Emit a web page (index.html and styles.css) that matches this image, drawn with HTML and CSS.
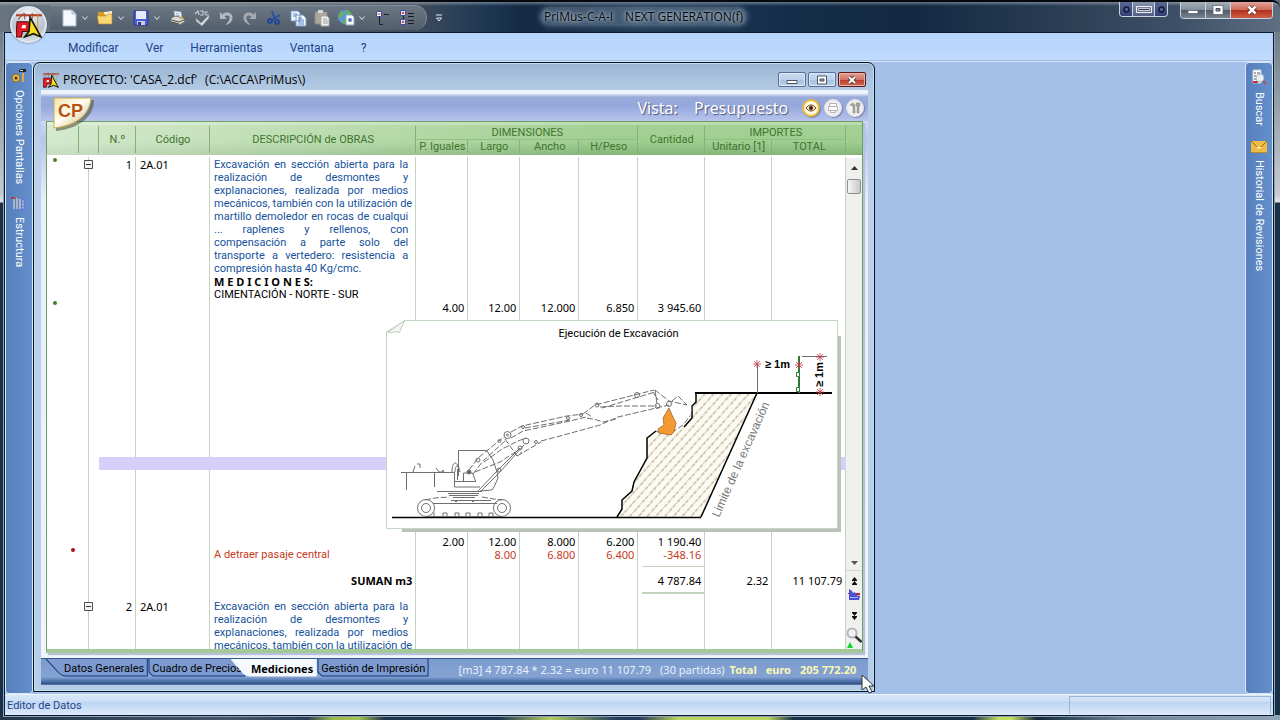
FILE: index.html
```html
<!DOCTYPE html>
<html lang="es">
<head>
<meta charset="utf-8">
<title>PriMus-C-A-I NEXT GENERATION(f)</title>
<link rel="stylesheet" href="styles.css">
</head>
<body>
<svg class="defs" width="0" height="0" aria-hidden="true">
  <defs>
    <symbol id="logo" viewBox="0 0 24 24">
      <path d="M2 7l5-6M8 1v6M15 1v6" stroke="#84604c" stroke-width="1"/>
      <path d="M0 3h24" stroke="#b0452d" stroke-width="2"/>
      <path d="M20 3v14" stroke="#c9a24a"/>
      <path d="M1 9h9c5 0 5 9 0 9H6l-1 5H0z" fill="#e01b24" stroke="#4b0a0c"/>
      <path d="M6 12h3v3H5z" fill="#fff"/>
      <path d="M13 5l10 18-7-3-8 3 4-5z" fill="#f4e11d" stroke="#16140a" stroke-width="1.5"/>
    </symbol>
    <symbol id="chev" viewBox="0 0 8 8"><path d="M1.500 2.500l2.500 3 2.500-3" fill="none" stroke="#e6edf5"/></symbol>
    <symbol id="fold" viewBox="0 0 9 9"><path d="M.5.5h8v8h-8z" fill="#f4f4f0" stroke="#4c4c4c"/><path d="M2 4.500h5" stroke="#333"/></symbol>
    <pattern id="hatch" width="6.500" height="12" patternUnits="userSpaceOnUse" patternTransform="rotate(42)">
      <rect width="6.500" height="12" fill="#fcfaf3"/>
      <path d="M1 0v4M1 5v1M1 7v4" stroke="#8f8350" stroke-width=".8"/>
    </pattern>
    <g id="tick"><path d="M-3-3L3 3M-3 3L3-3M0-4V4M-4 0H4" stroke="#c43c46" stroke-width=".8"/></g>
  </defs>
</svg>

<div class="app">
  <header class="titlebar">
    <button class="orb" aria-label="Menú principal"><svg width="26" height="26"><use href="#logo"/></svg></button>
    <div class="quick">
      <button class="tool" aria-label="Nuevo"><svg width="16" height="18"><path d="M2 1h9l4 4v12H2z" fill="#f4f8ff" stroke="#a9b8cb"/><path d="M11 1v4h4" fill="#cbd8e8" stroke="#a9b8cb"/></svg></button>
      <button class="drop" aria-label="Opciones de nuevo"><svg width="8" height="8"><use href="#chev"/></svg></button>
      <button class="tool" aria-label="Abrir"><svg width="16" height="16"><path d="M1 2h14v12H1z" fill="#d99a2a"/><path d="M1 2h6v2h8V2" fill="#f6efcf"/><path d="M8 2l7-1v4H8z" fill="#fbf3cf"/><path d="M0 6h9l2-2h4v10H2z" fill="#f7d873" stroke="#b98829" stroke-width=".6"/></svg></button>
      <button class="drop" aria-label="Opciones de abrir"><svg width="8" height="8"><use href="#chev"/></svg></button>
      <button class="tool" aria-label="Guardar"><svg width="16" height="16"><path d="M1 1h14v14H1z" fill="#4c5fd2" stroke="#2a378f"/><path d="M3 1h10v8H3z" fill="#e4eaf8"/><path d="M4 11h8v4H4z" fill="#c7cde4"/><path d="M5 12h3v3H5z" fill="#2a378f"/></svg></button>
      <button class="drop last" aria-label="Opciones de guardar"><svg width="8" height="8"><use href="#chev"/></svg></button>
      <button class="tool" aria-label="Imprimir"><svg width="16" height="16"><path d="M4 1l7 1 1 6-7 1z" fill="#fff" stroke="#8fa6c4" stroke-width=".6"/><path d="M5.500 3l4 1M6 5l4 1" stroke="#6f8fc0" stroke-width=".8"/><path d="M1 8l4-2 9 2 1 4-6 3-8-3z" fill="#dcdcd6" stroke="#5b5b60" stroke-width=".8"/><path d="M2 10l7 2 5-2M2 12l7 2" stroke="#4d4a44" fill="none"/><path d="M10 8h3" stroke="#d5a33a" stroke-width="2"/></svg></button>
      <button class="tool" aria-label="Ortografía"><svg width="16" height="16"><path d="M1 4l3-3 1 4M6 1h3v4H6M14 2h-3l1 3h3" fill="none" stroke="#c5cad1" stroke-width="1.2"/><path d="M2 8l5 5 8-8v3l-7 8-6-5z" fill="#d7d9da" stroke="#8b8f95" stroke-width=".6"/></svg></button>
      <button class="tool" aria-label="Deshacer"><svg width="16" height="16"><path d="M2 2v7h7L6.500 6.500c2-2 6-1 5 2-.5 3-2 4-4 6.500 5-1.500 7-4 7-7.500 0-5-7-6.500-10-3z" fill="#b4b7bb"/></svg></button>
      <button class="tool" aria-label="Rehacer"><svg width="16" height="16"><path d="M14 2v7H7l2.500-2.500c-2-2-6-1-5 2 .5 3 2 4 4 6.500-5-1.500-7-4-7-7.500 0-5 7-6.500 10-3z" fill="#a4a9af"/></svg></button>
      <button class="tool" aria-label="Cortar"><svg width="16" height="16"><path d="M6 1l3 8M14 5L6 10" stroke="#2a4fa8" stroke-width="2"/><circle cx="4" cy="11" r="2" fill="none" stroke="#183f9c" stroke-width="1.6"/><circle cx="11" cy="12" r="2" fill="none" stroke="#183f9c" stroke-width="1.6"/></svg></button>
      <button class="tool" aria-label="Copiar"><svg width="18" height="18"><path d="M2 2h7l2 2v8H2zM7 6h7l3 3v8H7z" fill="#f3f8ff" stroke="#7b98c4"/><path d="M4 5h4M4 7h3M9 9h4M9 11h6M9 13h6M9 15h6" stroke="#5680bd"/></svg></button>
      <button class="tool" aria-label="Pegar"><svg width="18" height="18"><path d="M2 3h12v12H2z" fill="#aaa79c" stroke="#8a8a84"/><path d="M5 1h5v3H5z" fill="#d8d8d8"/><path d="M8 7h6l2 2v8H8z" fill="#f1f1ee" stroke="#a9a9a4"/><path d="M10 10h4M10 12h5M10 14h5" stroke="#a0a0a0"/></svg></button>
      <button class="tool" aria-label="Web"><svg width="18" height="18"><circle cx="8" cy="8" r="7" fill="#5c97d8"/><path d="M3 3c3-2 4 0 3 3S2 9 1 8zM9 1c5 0 6 4 5 7-3 0-3-3-5-3zM5 14l2-4 4 1-1 4z" fill="#62b35a"/><path d="M9 6h6l2 2v8H9z" fill="#f7faff" stroke="#93a6bd"/><circle cx="13" cy="11" r="2" fill="#6079b5"/></svg></button>
      <button class="drop last" aria-label="Opciones de web"><svg width="8" height="8"><use href="#chev"/></svg></button>
      <button class="tool" aria-label="Contraer"><svg width="16" height="16"><path d="M1.500 1.500h5v5h-5z" fill="#fff" stroke="#3b4f9f"/><path d="M2.500 4h3" stroke="#c12a2a"/><path d="M9 4.500h5M4.500 7v7.500H8" stroke="#1a1d28" fill="none"/><path d="M9 8.500h5M9 11.500h5M9 14.500h5" stroke="#59636f"/></svg></button>
      <button class="tool" aria-label="Expandir"><svg width="16" height="16"><path d="M1.500.5h5v5h-5zM1.500 9.500h5v5h-5z" fill="#fff" stroke="#3b4f9f"/><path d="M2.500 3h3M4 1.500v3M2.500 12h3M4 10.500v3" stroke="#c12a2a"/><path d="M4.500 6v3M9 3.500h6M9 6.500h6M9 10.500h6M9 13.500h6" stroke="#1a1d28"/></svg></button>
    </div>
    <button class="more" aria-label="Personalizar"><svg width="8" height="10"><path d="M1 1h6" stroke="#e6edf5"/><path d="M1.500 4l2.500 3 2.500-3z" fill="none" stroke="#e6edf5"/></svg></button>
    <h1 class="apptitle"><span>PriMus-C-A-I</span><span>NEXT GENERATION(f)</span></h1>
    <div class="extra">
      <button aria-label="Pantalla anterior"><svg width="9" height="9"><circle cx="4.500" cy="4.500" r="2.500" fill="#55628e" stroke="#131c3d" stroke-width="1.500"/></svg></button>
      <button class="wide" aria-label="Pantalla"><svg width="18" height="9"><path d="M1.500 1.500h15v6h-15z" fill="none" stroke="#eef1f8"/><path d="M3.500 3.500h11v2h-11z" fill="#333e58" stroke="#c8ccd8"/></svg></button>
      <button aria-label="Pantalla siguiente"><svg width="9" height="9"><circle cx="4.500" cy="4.500" r="2.500" fill="#55628e" stroke="#131c3d" stroke-width="1.500"/></svg></button>
    </div>
    <div class="winctl">
      <button aria-label="Minimizar"><svg width="12" height="10"><path d="M1 5.500h10v3H1z" fill="#fff" stroke="#555b66" stroke-width=".7"/></svg></button>
      <button aria-label="Maximizar"><svg width="12" height="10"><path d="M1 .5h10v9H1z" fill="#fff" stroke="#555b66" stroke-width=".7"/><path d="M4 3.500h4v2.500H4z" fill="#8b929c" stroke="#454b56"/></svg></button>
      <button class="close" aria-label="Cerrar"><svg width="12" height="10"><path d="M2.500 1.500l7 7M9.500 1.500l-7 7" stroke="#5b2522" stroke-width="4"/><path d="M2.500 1.500l7 7M9.500 1.500l-7 7" stroke="#fff" stroke-width="2.500"/></svg></button>
    </div>
  </header>

  <div class="client">
    <nav class="menu">
      <button>Modificar</button><button>Ver</button><button>Herramientas</button><button>Ventana</button><button>?</button>
    </nav>

    <div class="work">
      <aside class="rail left">
        <button><svg width="16" height="14"><circle cx="5" cy="9" r="4" fill="#e8bc4a" stroke="#8b6a1d"/><circle cx="5" cy="9" r="1.500" fill="#3f3113"/><path d="M8 1l2-1h5v3H8z" fill="#222"/><path d="M9 1h3v1H9z" fill="#ddd"/><path d="M11 4h2v9h-2z" fill="#e3a443"/></svg><span>Opciones Pantallas</span></button>
        <button><svg width="16" height="14"><path d="M3 1v12M6 2v11M9 3v10M12 4v9" stroke="#c8c2cc" stroke-width="1.500"/><path d="M0 1h4v2H0z" fill="#b53c3c"/><path d="M10 4h4M10 7h4M10 10h4M10 13h4" stroke="#5a6cf0"/></svg><span>Estructura</span></button>
      </aside>

      <main class="desktop">
        <section class="win">
          <div class="wintitle">
            <svg width="16" height="16"><use href="#logo"/></svg>
            <h2><span>PROYECTO: 'CASA_2.dcf'</span><span>(C:\ACCA\PriMus\)</span></h2>
            <div class="ctl">
              <button aria-label="Minimizar ventana"><svg width="12" height="10"><path d="M1 5.500h10v3H1z" fill="#fff" stroke="#4c566b"/></svg></button>
              <button aria-label="Maximizar ventana"><svg width="12" height="10"><path d="M1.500 1h9v8h-9z" fill="#fff" stroke="#4c566b"/><path d="M4 4h4v2H4z" fill="#8b97ad" stroke="#4c566b"/></svg></button>
              <button class="close" aria-label="Cerrar ventana"><svg width="12" height="10"><path d="M3 2l6 6M9 2L3 8" stroke="#6b3833" stroke-width="4"/><path d="M3 2l6 6M9 2L3 8" stroke="#fff" stroke-width="2"/></svg></button>
            </div>
          </div>

          <div class="body">
            <div class="viewbar">
              <svg class="cp" width="44" height="38" aria-hidden="true">
                <defs><linearGradient id="gold" x2="1" y2="1"><stop offset="0" stop-color="#efe3a8"/><stop offset=".45" stop-color="#fffdf2"/><stop offset="1" stop-color="#cfb268"/></linearGradient></defs>
                <path d="M3 4h38c0 15-12 28-38 31z" fill="#55553d" opacity=".6"/>
                <path d="M1 2h37c-1 14-11 27-37 30z" fill="url(#gold)" stroke="#c9ae55"/>
                <text x="5" y="21">CP</text>
              </svg>
              <p class="vista"><span>Vista:</span><span>Presupuesto</span></p>
              <button class="round on" aria-label="Ver"><svg width="14" height="14"><path d="M2 7c3-4 7-4 10 0-3 4-7 4-10 0z" fill="#f3e4c8" stroke="#6a3d1a"/><circle cx="7" cy="7" r="2" fill="#3c1f0e"/></svg></button>
              <button class="round" aria-label="Imprimir vista"><svg width="14" height="14"><path d="M3.500 2.500h7v3h-7zM2.500 5.500h9v4h-9zM4.500 9.500h5v2h-5z" fill="#fafafa" stroke="#b4b4b4"/></svg></button>
              <button class="round" aria-label="Herramientas de vista"><svg width="14" height="14"><path d="M2 4l3-2 2 2v8H5V5zM8 2h4v3h-1v7H9V5H8z" fill="#a5a5a2" stroke="#858583" stroke-width=".5"/></svg></button>
            </div>

            <div class="sheet">
              <div class="gridclip">
                <table>
                  <colgroup><col class="c-mark"><col class="c-tree"><col class="c-num"><col class="c-code"><col><col class="c-s"><col class="c-s"><col class="c-m"><col class="c-m"><col class="c-l"><col class="c-l"><col class="c-xl"></colgroup>
                  <thead>
                    <tr><th rowspan="2"></th><th rowspan="2"></th><th rowspan="2">N.º</th><th rowspan="2">Código</th><th rowspan="2">DESCRIPCIÓN de OBRAS</th><th colspan="4" class="group">DIMENSIONES</th><th rowspan="2">Cantidad</th><th colspan="2" class="group">IMPORTES</th></tr>
                    <tr class="sub"><th>P. Iguales</th><th>Largo</th><th>Ancho</th><th>H/Peso</th><th>Unitario [1]</th><th>TOTAL</th></tr>
                  </thead>
                  <tbody>
                    <tr class="lead"><td></td><td></td><td></td><td></td><td></td><td></td><td></td><td></td><td></td><td></td><td></td><td></td></tr>
                    <tr><td class="mark"><i class="dot"></i></td><td class="tree"><button aria-label="Contraer 1"><svg width="9" height="9"><use href="#fold"/></svg></button></td><td>1</td><td class="code">2A.01</td><td class="txt desc">Excavación en sección abierta para la<br>realización de desmontes y<br>explanaciones, realizada por medios<br>mecánicos, también con la utilización de<br>martillo demoledor en rocas de cualqui<br>... raplenes y rellenos, con<br>compensación a parte solo del<br>transporte a vertedero: resistencia a<br><span>compresión hasta 40 Kg/cmc.</span></td><td></td><td></td><td></td><td></td><td></td><td></td><td></td></tr>
                    <tr><td></td><td></td><td></td><td></td><td class="head">M E D I C I O N E S:</td><td></td><td></td><td></td><td></td><td></td><td></td><td></td></tr>
                    <tr><td></td><td></td><td></td><td></td><td class="txt">CIMENTACIÓN - NORTE - SUR</td><td></td><td></td><td></td><td></td><td></td><td></td><td></td></tr>
                    <tr><td class="mark"><i class="dot"></i></td><td></td><td></td><td></td><td></td><td>4.00</td><td>12.00</td><td>12.000</td><td>6.850</td><td>3 945.60</td><td></td><td></td></tr>
                    <tr class="gap-a"><td></td><td></td><td></td><td></td><td></td><td></td><td></td><td></td><td></td><td></td><td></td><td></td></tr>
                    <tr class="current"><td></td><td></td><td></td><td></td><td></td><td></td><td></td><td></td><td></td><td></td><td></td><td></td></tr>
                    <tr class="gap-b"><td></td><td></td><td></td><td></td><td></td><td></td><td></td><td></td><td></td><td></td><td></td><td></td></tr>
                    <tr><td></td><td></td><td></td><td></td><td></td><td>2.00</td><td>12.00</td><td>8.000</td><td>6.200</td><td>1 190.40</td><td></td><td></td></tr>
                    <tr class="minus"><td class="mark end"><i class="dot red"></i></td><td></td><td></td><td></td><td class="txt">A detraer pasaje central</td><td></td><td>8.00</td><td>6.800</td><td>6.400</td><td>-348.16</td><td></td><td></td></tr>
                    <tr><td></td><td></td><td></td><td></td><td></td><td></td><td></td><td></td><td></td><td class="rule"></td><td></td><td></td></tr>
                    <tr><td></td><td></td><td></td><td></td><td class="sum">SUMAN m3</td><td></td><td></td><td></td><td></td><td>4 787.84</td><td>2.32</td><td>11 107.79</td></tr>
                    <tr><td></td><td></td><td></td><td></td><td></td><td></td><td></td><td></td><td></td><td class="rule thick"></td><td></td><td></td></tr>
                    <tr><td></td><td class="tree"><button aria-label="Contraer 2"><svg width="9" height="9"><use href="#fold"/></svg></button></td><td>2</td><td class="code">2A.01</td><td class="txt desc">Excavación en sección abierta para la<br>realización de desmontes y<br>explanaciones, realizada por medios<br>mecánicos, también con la utilización de</td><td></td><td></td><td></td><td></td><td></td><td></td><td></td></tr>
                  </tbody>
                </table>
              </div>

              <div class="scroll">
                <button aria-label="Subir"><svg width="7" height="4"><path d="M0 4l3.500-4L7 4z" fill="#333"/></svg></button>
                <div class="thumb"></div>
                <button class="down" aria-label="Bajar"><svg width="7" height="4"><path d="M0 0h7L3.500 4z" fill="#555"/></svg></button>
                <div class="nav">
                  <button aria-label="Partida anterior"><svg width="5" height="8"><path d="M0 3l2.500-3L5 3zM0 7l2.500-3L5 7z" fill="#111"/><path d="M0 3.500h5M0 7.500h5" stroke="#111"/></svg></button>
                  <button aria-label="Marcar"><svg width="12" height="11"><path d="M7 4h5v2H7zM0 4h2v1H0z" fill="#b32a36"/><path d="M1 0l3 2 1 2 2-1 1 3 4 1-1 4H1z" fill="#4b4fd8"/><path d="M2 8.500h8" stroke="#a9b2ff"/></svg></button>
                  <button class="next" aria-label="Partida siguiente"><svg width="5" height="8"><path d="M0 1h5L2.500 4zM0 5h5L2.500 8z" fill="#111"/><path d="M0 .5h5M0 4.500h5" stroke="#111"/></svg></button>
                </div>
                <button class="lens" aria-label="Lupa"><svg width="16" height="16"><circle cx="6" cy="6" r="4.500" fill="#eef2f5" stroke="#b4b7ba" stroke-width="2"/><path d="M9.500 9.500l6 5.500" stroke="#333" stroke-width="2.500"/></svg></button>
                <svg class="go" width="6" height="6"><path d="M0 6l3-6 3 6z" fill="#16d62a"/></svg>
              </div>

              <figure class="note">
                <svg viewBox="386 320 455 212" width="455" height="212" role="img" aria-label="Ejecución de Excavación">
                  <path d="M402 528h436V336h3v196H402z" fill="#bcc2ba"/>
                  <path d="M405 320.500h432.500v208H386.500V332z" fill="#fff" stroke="#c3d6c3"/>
                  <path d="M386.500 332l6-3 12-8.500-5 12-4-1-3 1z" fill="#f2f5f2" stroke="#bccabc"/>
                  <text class="cap" x="618.500" y="337" text-anchor="middle">Ejecución de Excavación</text>

                  <path d="M617 517l5-8v-9l10-9 2-9 13-24v-20l9-7 12 2 6 2 10-8 8-9v-12l4-4v-9h61l-56 124z" fill="url(#hatch)"/>
                  <path d="M617 517l5-8v-9l10-9 2-9 13-24v-20l9-7M684 427l8-9v-12l4-4v-9M757 393l-56 124" class="ink"/>
                  <path d="M392 517.500h309" class="ink"/>
                  <path d="M695 393h137" stroke="#000" stroke-width="2"/>
                  <path d="M656 431l5 2h10l12-8 7-9M692 406l-1 10" class="thin dash"/>

                  <g class="thin">
                    <path d="M401 472.500h53.500V487H480M406.500 473v17M434.500 473v14M458.500 476v-25.500H487M454 481.500h22M463.500 481v-8h9l3 8M457.500 469v11"/>
                    <path d="M413 472l2-6M417 464h3v4M436 468l3 4h3l1-2 1 2M452 472c0-12 6-12 7 0M455 472c0-8 4-8 5 0"/>
                    <path d="M437 491.500h45M448 493.500h31M449 495.500h29M453 497.500h22"/>
                    <path d="M451 500.500h40M433 503.500h64M426 516.500h76M434 512.500v4M443 516v-3h4v3M455 516v-3h4v3M466 516v-3h4v3M478 516v-3h4v3M489 516v-3h4v3"/>
                    <path d="M425 500l10-2 14-1M482 497l12 2 8 1M454 500l2 2 2-2M471 500l2 2 2-2" class="dash"/>
                    <circle cx="426" cy="508" r="8.500"/><circle cx="426" cy="508" r="4.500"/><circle cx="502" cy="508" r="8.500"/><circle cx="502" cy="508" r="4.500"/>
                    <circle cx="478" cy="460" r="2"/><circle cx="507.500" cy="435" r="3.500"/><circle cx="507.500" cy="435" r="1"/><circle cx="499.500" cy="441" r="1.500"/><circle cx="526" cy="441" r="3"/><circle cx="536" cy="442" r="1.500"/><circle cx="523" cy="427" r="1.500"/><circle cx="520" cy="448" r="2"/><circle cx="499" cy="470" r="2"/><circle cx="469" cy="472" r="2" fill="#666"/>
                    <circle cx="568" cy="418" r="1.500"/><circle cx="581" cy="415" r="1.500"/><circle cx="597" cy="405" r="2"/><circle cx="637" cy="395" r="2.500"/><circle cx="657.500" cy="406" r="2.500"/><circle cx="669" cy="404" r="2.500"/>
                    <path d="M487 451l6 9 4 12 1 6-4 9-2 3-12 1M478 491l20-21 22-22M481 491l19-19 24-27"/>
                    <path d="M469 470l9-12 27-22M473 474l10-13 22-20 2-3M484 462l18-13 16-8 8-3M475 472l25-10 17-11M505 439l12 17 5-4" class="dash"/>
                    <path d="M511 432l11-6 45-10 16-2M511 438l12-7 47-10 16-4M525 428l45-8M517 456l24-14M541 441l19-5 40-11 18-8 51-12" class="dash"/>
                    <path d="M583 414l12-9 59-15M587 418l10 2 6 2 13-3M602 408l53-16M600 407l20-1h37M586 413l6 4M655 390l2 14M655 390l14 11 18 4M672 401l6-5 9 9" class="dash"/>
                    <path d="M653 392l5 8"/>
                  </g>
                  <path d="M669 408l3 7 4 8-2 9-3 3-12-2-1-4 6-4-1-7z" fill="#f39a33" stroke="#a3632a" stroke-width=".8"/>

                  <path d="M757.500 364v29M802 356.500h25" class="thin"/>
                  <path d="M799 356v37" stroke="#2f7a33" stroke-width="2"/>
                  <path d="M796.500 372.500h3v4h-3zM796.500 387.500h3v4h-3z" fill="#fff" stroke="#2f7a33"/>
                  <use href="#tick" x="757" y="364"/><use href="#tick" x="799" y="365"/><use href="#tick" x="820" y="357"/><use href="#tick" x="820" y="392"/>
                  <text class="dim" x="765" y="368">≥ 1m</text>
                  <text class="dim" transform="translate(823 387) rotate(-90)">≥ 1m</text>
                  <text class="limit" transform="translate(719 518) rotate(-66)">Limite de la excavación</text>
                </svg>
              </figure>
            </div>

            <footer class="foot">
              <div class="tabs">
                <button class="tab first"><svg viewBox="0 0 102 18" preserveAspectRatio="none"><path d="M0 0L13 14Q16 17 20 17H101V0"/></svg><span>Datos Generales</span></button>
                <button class="tab"><svg viewBox="0 0 96 18" preserveAspectRatio="none"><path d="M1 0V13L5 17H95V0"/></svg><span>Cuadro de Precios</span></button>
                <button class="tab active"><svg viewBox="0 0 86 18" preserveAspectRatio="none"><path d="M0 0L13 15Q15 17 18 17H85V0"/></svg><span>Mediciones</span></button>
                <button class="tab"><svg viewBox="0 0 110 18" preserveAspectRatio="none"><path d="M1 0V13L5 17H109V0"/></svg><span>Gestión de Impresión</span></button>
              </div>
              <p class="calc"><span>[m3] 4 787.84 * 2.32 = euro 11 107.79</span><span>(30 partidas)</span></p>
              <p class="total"><span>Total</span><span>euro</span><span>205 772.20</span></p>
            </footer>
          </div>
          <svg class="cursor" width="14" height="20" aria-hidden="true"><path d="M1 1v15l4-3 3 6 3-1-3-6h5z" fill="#fff" stroke="#333"/></svg>
        </section>
      </main>

      <aside class="rail right">
        <button><svg width="16" height="16"><path d="M2 1h8v13H2z" fill="#fff" stroke="#c9cfdb"/><path d="M3 4h2M6 4h3M3 7h2M6 7h3M3 10h2" stroke="#555"/><path d="M2 12h5v2H2z" fill="#c2273d"/><circle cx="9" cy="9" r="4" fill="#e5f1f4" stroke="#a9b7c2"/><path d="M12 12l3 3" stroke="#a55" stroke-width="2"/></svg><span>Buscar</span></button>
        <button><svg width="16" height="12"><path d="M0 0h16v12H0z" fill="#eebb45"/><path d="M0 0l6 6M16 0l-6 6" stroke="#8a6a20" fill="none"/><path d="M5 6h6l-3 2z" fill="#fff0bd"/><path d="M0 11.500h16" stroke="#bf8c2a"/></svg><span>Historial de Revisiones</span></button>
      </aside>
    </div>

    <div class="status"><span>Editor de Datos</span><span class="pane"></span></div>
  </div>
</div>
</body>
</html>
```
FILE: styles.css
```css
:root {
  --ui: "Open Sans", "Noto Sans", sans-serif;
  --num: "Noto Sans", "Open Sans", sans-serif;
  --text: Roboto, "Noto Sans", sans-serif;
  --line: #c3d3bf;
}

* { box-sizing: border-box; }

body { margin: 0; font: 11px/13px var(--num); color: #000; }

h1, h2, p, figure { margin: 0; font-weight: normal; }

button {
  padding: 0;
  border: 0;
  background: none;
  color: inherit;
  font: inherit;
}

svg { display: block; }

.defs { position: absolute; }

.app {
  display: flex;
  flex-direction: column;
  height: 100vh;
  min-height: 400px;
  padding: 0 6px 4px 4px;
  overflow: hidden;
  background:
    linear-gradient(90deg, #22364c 0, #44566a 18%, #2b3f57 24%, #9ab84d 26%, #a5c552 28%, #22364f 30%, #1f3654 39%, #b4cf5e 43%, #26405f 48%, #263a58 50%, #bbd65e 53%, #bbd65e 60%, #1a3048 62%, #1a3048 76%, #c4dd60 78%, #c4dd60 79%, #14283e 81%, #70859a 88%, #8fa4b5 100%) bottom / 100% 5px no-repeat,
    linear-gradient(#5d6c7c 0, #7f8a95 60px, #c6ccd2 195px, #dfe3e7 202px, #1a3147 203px, #16304a 100%);
}

/* Main title bar */
.titlebar {
  position: relative;
  z-index: 2;
  display: flex;
  flex: none;
  align-items: flex-start;
  height: 32px;
  margin: 0 -6px 0 -4px;
  padding: 0 7px 0 10px;
  border-top: 2px solid #05080c;
  border-radius: 0 8px 0 0;
  background:
    linear-gradient(rgb(255 255 255 / 35%), rgb(255 255 255 / 0) 4px),
    linear-gradient(90deg, #68747f 0, #56626f 20%, #3c4b5c 33%, #1d3752 38%, #132a44 41%, #203a56 50%, #142e49 62%, #122941 71%, #1a3048 75%, #2c4056 84%, #3e5067 92%, #5e6f82 100%);
}

.orb {
  display: grid;
  place-items: center;
  flex: none;
  width: 37px;
  height: 37px;
  margin-top: 4px;
  border: 2px solid #dfe5ec;
  border-radius: 50%;
  background: radial-gradient(circle at 50% 20%, #f4f6f8, #b9c2cd 60%, #e9edf2);
  box-shadow: 0 0 2px #33465c;
}

.quick {
  display: flex;
  align-items: center;
  height: 25px;
  margin: 3px 0 0 3px;
  padding: 0 7px 0 7px;
  border: solid #818d99;
  border-width: 1px 1px 0 0;
  border-radius: 0 13px 13px 0;
  background: linear-gradient(#6b7783, #525e6b);
}

.tool { display: grid; place-items: center; width: 24px; height: 22px; }
.drop { width: 8px; margin-right: 4px; }
.drop.last { margin-right: 5px; }
.more { margin: 12px 0 0 8px; }

.apptitle {
  display: flex;
  gap: 12px;
  margin: 5px auto 0 97px;
  padding: 0 4px;
  border-radius: 10px;
  background: rgb(160 175 192 / 30%);
  box-shadow: 0 0 5px 1px rgb(160 175 192 / 30%);
  color: #05080c;
  font: 12px/19px var(--ui);
  text-shadow: 0 0 3px #b4c0cc, 0 0 5px #a9b7c6, 0 0 8px #8d9daf;
}

.extra, .winctl {
  display: flex;
  overflow: hidden;
  border: 1px solid #c9d2dd;
  border-top: 0;
  border-radius: 0 0 4px 4px;
}

.extra { margin-right: 12px; }
.extra button { display: grid; place-items: center; width: 12px; height: 14px; background: linear-gradient(#5a6790, #353f75); }
.extra .wide { width: 23px; border: solid #c9d2dd; border-width: 0 1px; background: linear-gradient(#8a93ab, #555f82); }

.winctl button { display: grid; place-items: center; width: 25px; height: 16px; border-right: 1px solid #c9d2dd; background: linear-gradient(#a5afba, #828e9b 50%, #4d5a69 50%, #79848f); }
.winctl .close { width: 41px; border-right: 0; background: linear-gradient(#e0a598, #cf6858 50%, #b0301f 50%, #cf5e44); }

/* Client area */
.client {
  display: flex;
  flex: 1;
  flex-direction: column;
  min-height: 0;
  border: 1px solid #0b1a2c;
  box-shadow: 0 0 0 1px #8da0b4;
}

.menu {
  display: flex;
  flex: none;
  gap: 27px;
  height: 28px;
  padding: 0 63px;
  border-bottom: 1px solid #a5bcdc;
  background: linear-gradient(#b6d3fa, #c0dbff);
  color: #1d4489;
  font: 12px/30px var(--text);
}

.work {
  display: grid;
  flex: 1;
  grid-template-columns: 28px 1fr 28px;
  min-height: 0;
  border-top: 1px solid #d6e5fa;
  background: #a4c0e9;
}

.rail {
  display: flex;
  flex-direction: column;
  gap: 12px;
  padding: 6px 0;
  border: 1px solid #dae8fb;
  border-radius: 4px;
  background: linear-gradient(90deg, #5580bc, #658fca);
  color: #fff;
  font: 11px/14px var(--text);
}

.rail button { display: flex; flex-direction: column; align-items: center; gap: 7px; }
.rail span { writing-mode: vertical-rl; }
.rail.right { gap: 15px; }

.desktop {
  display: grid;
  grid-template-columns: minmax(0, 843fr) minmax(0, 370fr);
  min-height: 0;
}

/* Project window */
.win {
  position: relative;
  display: flex;
  flex-direction: column;
  min-height: 0;
  margin-bottom: 2px;
  padding: 0 6px 6px 7px;
  border: 1px solid #0a131f;
  border-radius: 7px 7px 0 0;
  background: linear-gradient(#99b4d2 0, #b4cbe5 27px, #bdd0ea 110px, #b6cde8 100%);
  box-shadow: inset 0 0 0 1px #b9e3f4;
}

.wintitle {
  display: flex;
  flex: none;
  align-items: center;
  height: 27px;
  padding: 6px 2px 0 2px;
}

.wintitle h2 { display: flex; gap: 8px; margin: 0 auto 0 4px; font: 12px/20px var(--ui); }

.ctl { display: flex; gap: 2px; }
.ctl button { display: grid; place-items: center; width: 28px; height: 15px; border: 1px solid #55709a; border-radius: 2px; background: linear-gradient(#c8dbf0, #bcd1ea 50%, #a4bedd 50%, #bed3ea); box-shadow: inset 0 0 0 1px #dbe8f6; }
.ctl .close { border-color: #5a1a1c; background: linear-gradient(#e2a094, #d17467 50%, #b93c2a 50%, #cc6650); box-shadow: inset 0 0 0 1px #eab5ab; }

.body {
  display: flex;
  flex: 1;
  flex-direction: column;
  min-height: 0;
  background: linear-gradient(#f1f5fd 0, #b9c5ea 50px, #e7effb 110px, #f1f5fc 100%);
}

.viewbar {
  position: relative;
  z-index: 2;
  display: flex;
  flex: none;
  align-items: center;
  gap: 4px;
  height: 31px;
  padding: 5px 4px 0 12px;
  background: linear-gradient(#e6f0fc 0, #f5f7fd 3px, #9aabd9 7px, #94a8dc 16px, #b8c4ec 100%);
}

.cp { position: absolute; left: 12px; top: 6px; }
.cp text { fill: #b8510d; font: bold 18px "Liberation Sans", Arial, sans-serif; }

.vista { display: flex; gap: 16px; margin-left: auto; padding-right: 10px; color: #fff; font-size: 16px; line-height: 22px; text-shadow: 1px 1px 1px #46527a; }

.round { display: grid; place-items: center; width: 18px; height: 18px; border: 1px solid #e3e3e6; border-radius: 50%; background: radial-gradient(#fff, #e2e2e2); box-shadow: 1px 1px 1px #7380aa; }
.round.on { border: 2px solid #eeb93a; background: #fff8e2; }

.sheet {
  position: relative;
  display: grid;
  flex: 1;
  grid-template-columns: minmax(0, 1fr) 16px;
  min-height: 0;
  margin: 0 5px 5px;
  border: 1px solid #6f9f66;
  border-bottom: 4px solid #a4c898;
  background:
    linear-gradient(#b9dcae 0, #b9dcae 3px, #a5d094 3px, #9fce8f 20px, #84b478 100%) top / 100% 33px no-repeat,
    #fff;
  box-shadow: 2px 2px 1px #b7c2da;
}

.gridclip { min-height: 0; overflow: hidden; background: linear-gradient(100deg, rgb(255 255 255 / 55%), rgb(255 255 255 / 0) 70%) top / 100% 33px no-repeat; }

table { width: 100%; table-layout: fixed; border-spacing: 0; }
.c-mark { width: 32px; }
.c-tree { width: 20px; }
.c-num { width: 37px; }
.c-code { width: 74px; }
.c-s { width: 52px; }
.c-m { width: 59px; }
.c-l { width: 67px; }
.c-xl { width: 74px; }

th {
  padding: 0;
  background: linear-gradient(#83b276, #83b276) right 4px / 1px 27px no-repeat;
  color: #40752f;
  font: 11px/13px var(--text);
  white-space: nowrap;
}
th.group { height: 18px; padding-top: 4px; border-bottom: 1px solid #92bf84; background-size: 1px 14px; }
.sub th { height: 17px; vertical-align: top; background-position: right 0; background-size: 1px 13px; }

td {
  height: 13px;
  padding: 0 3px 0 0;
  border-right: 1px solid var(--line);
  text-align: right;
  vertical-align: top;
  white-space: nowrap;
}
td:nth-child(1) { border-right: 0; }

.lead td { height: 1px; }
.gap-a td { height: 143px; }
.gap-b td { height: 65px; }
.current td { border-color: #d4d0fa; background: #d4d0fa; }
.current td:nth-child(1) { background: none; }
td:nth-child(2), .current td:nth-child(2) { border-right: 0; background: linear-gradient(var(--line), var(--line)) 9px 0 / 1px 100% no-repeat; }

td.txt { padding-left: 4px; font-family: var(--text); text-align: left; }
td.code { padding-left: 4px; text-align: left; }
td.desc { padding-right: 7px; color: #14529c; text-align: justify; text-align-last: justify; }
.desc span { display: block; text-align-last: left; }
td.head { padding-left: 4px; font-weight: bold; text-align: left; }
td.sum { font-weight: bold; }
.minus { color: #c73a22; }
td.rule { background: linear-gradient(var(--line), var(--line)) 4px 5px / 100% 1px no-repeat; }
td.thick { background-size: 100% 2px; }

td.mark { padding: 0 22px 0 0; }
td.mark.end { padding-right: 4px; }
.dot { display: block; width: 4px; height: 4px; margin-left: auto; border-radius: 50%; background: #4a7a22; }
.dot.red { background: #a3131b; }
td.tree { padding: 2px 5px 0 5px; }
td.tree button { display: block; width: 9px; }

/* Scroll column */
.scroll {
  display: flex;
  flex-direction: column;
  align-items: center;
  min-height: 0;
  margin-top: 36px;
  padding-top: 8px;
  overflow: hidden;
  background: #f0f0ee;
}

.thumb { width: 14px; height: 15px; margin-top: 9px; border: 1px solid #8e8e8e; border-radius: 2px; background: linear-gradient(90deg, #f6f6f6, #c9c9cb); }
.down { margin-top: auto; }
.nav { display: flex; flex-direction: column; align-items: center; gap: 4px; width: 100%; margin-top: 5px; padding-top: 6px; border-top: 1px solid #d8d8d4; }
.next { margin-top: 8px; }
.lens { margin-top: 7px; }
.go { margin: -1px auto 1px 1px; }

/* Floating drawing */
.note { position: absolute; top: 198px; right: 21px; }
.cap { font: 11px var(--text); }
.dim { font: bold 11px "Liberation Sans", Arial, sans-serif; }
.limit { fill: #777; font: 12px "Liberation Sans", Arial, sans-serif; }
.thin { fill: none; stroke: #6f6f6f; stroke-width: 1; }
.dash { stroke-dasharray: 6 2; }
.ink { fill: none; stroke: #000; stroke-width: 1.5; }

/* Tabs and totals */
.foot {
  display: flex;
  flex: none;
  align-items: flex-start;
  height: 27px;
  padding-right: 12px;
  border-top: 1px solid #33578f;
  background: linear-gradient(#7c9cce 0, #84a2d2 18px, #5c7fb8 21px, #2f5185 25px, #7793bd 100%);
}

.tabs { display: flex; margin-left: 5px; }
.tab { position: relative; height: 18px; padding: 0 4px; font-family: var(--text); white-space: nowrap; }
.tab.first { padding: 0 4px 0 18px; }
.tab svg { position: absolute; inset: 0; width: 100%; height: 100%; }
.tab path { fill: #7d9bd0; stroke: #12357c; }
.tab span { position: relative; line-height: 17px; }
.tab.active { z-index: 1; margin-left: -15px; padding: 0 4px 0 20px; font-family: var(--num); font-weight: bold; }
.tab.active path { fill: #f6f9ff; stroke: #f6f9ff; }

.calc { display: flex; gap: 9px; margin-left: auto; color: #e9f0fb; line-height: 22px; white-space: nowrap; }
.total { display: flex; gap: 9px; margin-left: 5px; color: #f8f8b4; font-weight: bold; line-height: 22px; white-space: nowrap; }

.cursor { position: absolute; right: -1px; bottom: -3px; z-index: 3; }

/* Status bar */
.status {
  display: flex;
  flex: none;
  justify-content: space-between;
  height: 21px;
  padding: 1px 2px;
  border-top: 1px solid #eef5fd;
  background: linear-gradient(#d6e6f9 0, #cfe0f6 6px, #bcd5f2 7px, #dce9fa 100%);
  color: #1d4489;
  font: 11px/20px var(--text);
}

.pane { width: 202px; border: solid #9cb5d5; border-width: 1px 1px 0; }
```
